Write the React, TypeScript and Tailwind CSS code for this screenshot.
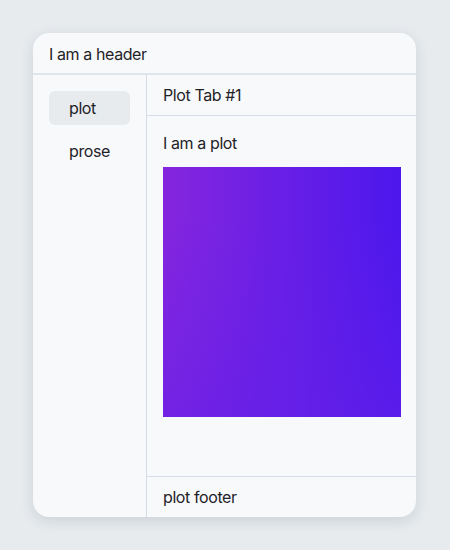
import React from 'react'

const tabs = ['plot', 'prose']

const App: React.FC = () => {
  const active = 'plot'

  return (
    <div
      className="min-h-screen w-full bg-[#e7ebee] p-[33px] text-[16px] tracking-[-0.025em] text-[#1f2328]"
      style={{ fontFamily: 'Inter, "Noto Sans", sans-serif' }}
    >
      <div className="flex h-[484px] w-[383px] flex-col overflow-hidden rounded-2xl bg-[#f8f9fb] shadow-[0_4px_14px_rgba(30,45,70,0.13)]">
        {/* header */}
        <div className="flex h-[42px] shrink-0 items-center border-b-2 border-[#dfe5ec] px-4 pt-[1px]">
          I am a header
        </div>

        <div className="flex min-h-0 flex-1">
          {/* sidebar */}
          <div className="flex w-[114px] shrink-0 flex-col gap-[9px] border-r border-[#d5dee8] px-4 pt-[16px]">
            {tabs.map((t) => (
              <div
                key={t}
                className={`flex h-[34px] items-center rounded-md px-5 pb-[1px] ${t === active ? 'bg-[#e8ebee]' : ''}`}
              >
                {t}
              </div>
            ))}
          </div>

          {/* main */}
          <div className="flex min-w-0 flex-1 flex-col">
            <div className="flex h-[41px] shrink-0 items-center border-b border-[#d5dee8] px-4">Plot Tab #1</div>
            <div className="flex flex-1 flex-col gap-3 px-4 pt-[15px]">
              <div className="leading-6">I am a plot</div>
              <div className="h-[250px] w-[238px] bg-[linear-gradient(to_bottom,rgba(100,32,232,0)_20%,rgba(100,32,232,0.55)),linear-gradient(to_right,#8526de,#4c17ed)]" />
            </div>
            <div className="flex h-[41px] shrink-0 items-center border-t border-[#d5dee8] px-4">plot footer</div>
          </div>
        </div>
      </div>
    </div>
  )
}

export default App
